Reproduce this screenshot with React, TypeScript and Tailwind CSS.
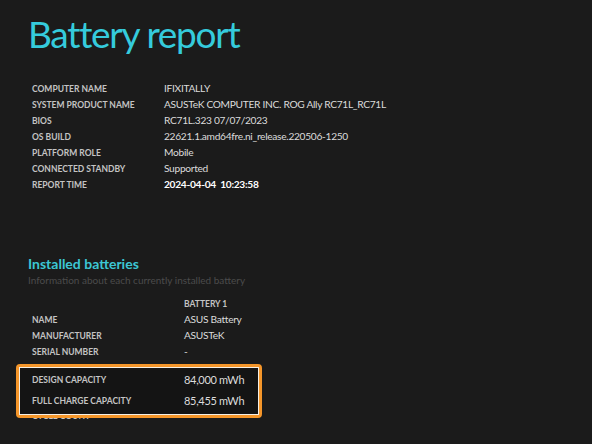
import React from "react";

const system = [
  ["COMPUTER NAME", "IFIXITALLY"],
  ["SYSTEM PRODUCT NAME", "ASUSTeK COMPUTER INC. ROG Ally RC71L_RC71L"],
  ["BIOS", "RC71L.323 07/07/2023"],
  ["OS BUILD", "22621.1.amd64fre.ni_release.220506-1250"],
  ["PLATFORM ROLE", "Mobile"],
  ["CONNECTED STANDBY", "Supported"],
];

const battery = [
  ["NAME", "ASUS Battery"],
  ["MANUFACTURER", "ASUSTeK"],
  ["SERIAL NUMBER", "-"],
  ["CHEMISTRY", "LIon"],
  ["DESIGN CAPACITY", "84,000 mWh"],
  ["FULL CHARGE CAPACITY", "85,455 mWh"],
  ["CYCLE COUNT", "-"],
];

// rows that sit under the orange callout
const covered = ["DESIGN CAPACITY", "FULL CHARGE CAPACITY"];

function Row({ label, value, labelW, strong, hidden }: { label: string; value: string; labelW: string; strong?: boolean; hidden?: boolean }) {
  return (
    <div className={`flex h-[16px] items-center ${hidden ? "invisible" : ""}`}>
      <div className={`${labelW} shrink-0 text-[8.5px] font-bold text-[#c4c4c4]`}>{label}</div>
      <div className={`text-[10.2px] tracking-[-0.3px] whitespace-pre ${strong ? "font-bold text-white" : "text-[#dcdcdc]"}`}>{value}</div>
    </div>
  );
}

export default function App() {
  return (
    <div
      className="relative w-[592px] h-[444px] overflow-hidden bg-[#1b1b1b]"
      style={{ fontFamily: 'Lato, "Open Sans", sans-serif' }}
    >
      <div className="pl-[28px] pt-[9px]">
        <h1 className="text-[37px] leading-[50px] font-normal tracking-[-1.3px] text-[#35cbdc]">Battery report</h1>

        <div className="mt-[22px] pl-[4px] flex flex-col">
          {system.map(([l, v]) => (
            <Row key={l} label={l} value={v} labelW="w-[132px]" />
          ))}
          <Row label="REPORT TIME" value="2024-04-04  10:23:58" labelW="w-[132px]" strong />
        </div>

        <h2 className="mt-[62px] text-[14px] leading-[18px] font-bold text-[#3cc6d4]">Installed batteries</h2>
        <p className="text-[10px] leading-[14px] text-[#4b4b4b]">Information about each currently installed battery</p>

        <div className="mt-[9px] pl-[4px] flex flex-col">
          <div className="flex h-[16px] items-center">
            <div className="w-[152px] shrink-0" />
            <div className="text-[8.5px] font-bold text-[#c4c4c4]">BATTERY 1</div>
          </div>
          {battery.map(([l, v]) => (
            <Row key={l} label={l} value={v} labelW="w-[152px]" hidden={covered.includes(l)} />
          ))}
        </div>
      </div>

      {/* highlight callout */}
      <div className="absolute left-[16px] top-[364px] w-[246px] h-[54px] rounded-[4px] border-[3px] border-[#f5962a]">
        <div className="h-full border border-[#f4efe6] bg-[#141414] flex flex-col justify-center gap-[5px] pl-[12px]">
          <div className="flex h-[16px] items-center">
            <div className="w-[152px] shrink-0 text-[8.5px] font-bold text-[#c4c4c4]">DESIGN CAPACITY</div>
            <div className="text-[11px] tracking-[-0.3px] text-[#dcdcdc]">84,000 mWh</div>
          </div>
          <div className="flex h-[16px] items-center">
            <div className="w-[152px] shrink-0 text-[8.5px] font-bold text-[#c4c4c4]">FULL CHARGE CAPACITY</div>
            <div className="text-[11px] tracking-[-0.3px] text-[#dcdcdc]">85,455 mWh</div>
          </div>
        </div>
      </div>
    </div>
  );
}
